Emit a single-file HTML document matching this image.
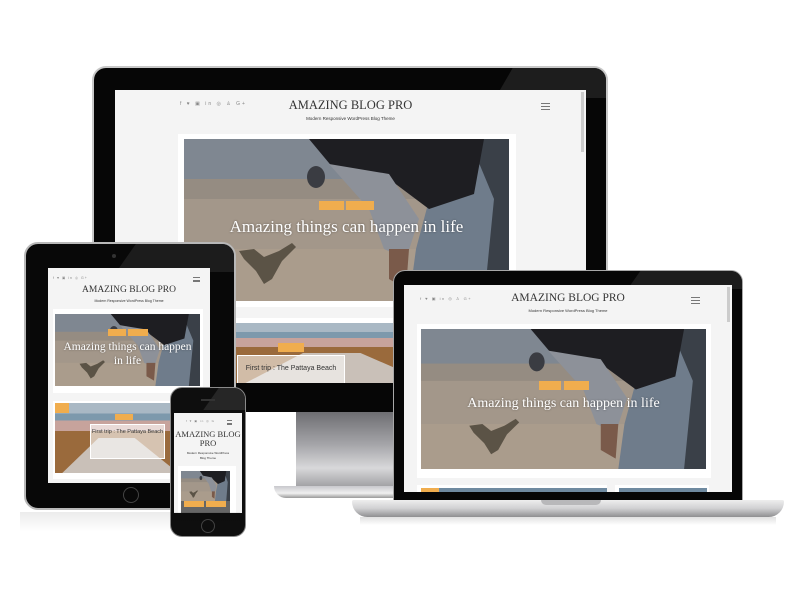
<!DOCTYPE html>
<html><head><meta charset="utf-8"><style>
*{margin:0;padding:0;box-sizing:border-box}
body{width:800px;height:600px;background:#fff;position:relative;overflow:hidden;font-family:"Liberation Sans",sans-serif}
.a{position:absolute}
.scr{position:absolute;background:#f4f4f4;overflow:hidden}
.t{position:absolute;left:0;right:0;text-align:center;font-family:"Liberation Serif",serif;color:#333;white-space:nowrap}
.sub{position:absolute;left:0;right:0;text-align:center;color:#333;white-space:nowrap}
.ham{position:absolute;width:9px;height:7px;border-top:1px solid #777;border-bottom:1px solid #777}
.ham:after{content:"";position:absolute;left:0;right:0;top:2px;border-top:1px solid #777}
.soc{position:absolute;color:#888;white-space:nowrap;letter-spacing:2px}
.tag{position:absolute;background:#f0ad4e;height:9px}
.ht{position:absolute;left:0;right:0;text-align:center;color:#fff;font-family:"Liberation Serif",serif;white-space:nowrap;text-shadow:0 0 2px rgba(0,0,0,.4)}
svg{display:block}
</style></head><body>
<svg width="0" height="0" style="position:absolute">
<defs>
<symbol id="hero" viewBox="0 0 325 162" preserveAspectRatio="none">
<rect width="325" height="162" fill="#a3978a"/>
<rect width="325" height="45" fill="#7f8791"/>
<rect y="40" width="325" height="20" fill="#958c82"/>
<rect y="110" width="325" height="52" fill="#aa9c8c"/>
<polygon points="235,0 325,0 325,162 225,162 232,110 248,50" fill="#6f7c8b"/>
<polygon points="285,0 325,0 325,162 300,162 310,60" fill="#3a4048"/>
<polygon points="125,0 300,0 290,55 245,70 205,40 150,30" fill="#1e1e22"/>
<ellipse cx="132" cy="38" rx="9" ry="11" fill="#3a3c42"/>
<polygon points="145,25 205,35 235,80 222,120 200,110 185,70" fill="#8d9199"/>
<polygon points="205,110 225,110 222,150 205,140" fill="#7a5a4a"/>
<polygon points="55,112 70,110 80,118 95,112 108,104 112,108 98,122 88,140 80,145 72,132 60,120" fill="#5b5346"/>
</symbol>
<symbol id="beach" viewBox="0 0 200 80" preserveAspectRatio="none">
<rect width="200" height="80" fill="#8c6a4a"/>
<rect width="200" height="14" fill="#a9b8c4"/>
<rect y="12" width="200" height="8" fill="#7d99ac"/>
<rect y="20" width="200" height="12" fill="#c7a39c"/>
<rect y="32" width="200" height="48" fill="#9a6a3c"/>
<polygon points="10,80 60,40 110,40 170,80" fill="#c9c0b8"/>
</symbol>
</defs></svg>

<!-- Monitor -->
<div class="a" style="left:92px;top:66px;width:516px;height:346px;background:#060606;border:2px solid #c8c8c8;border-bottom:none;border-radius:14px 14px 0 0;overflow:hidden">
 <div class="a" style="left:410px;top:0;width:120px;height:30px;background:#1d1d1d;transform:skewX(-30deg)"></div>
</div>
<div class="scr" style="left:115px;top:90px;width:471px;height:293px">
 <div class="soc" style="left:65px;top:11px;font-size:5px">f ♥ ▣ in ◎ ♙ G+</div>
 <div class="t" style="top:8px;font-size:12.5px;left:0;right:0">AMAZING BLOG PRO</div>
 <div class="sub" style="top:26px;font-size:4.5px">Modern Responsive WordPress Blog Theme</div>
 <div class="ham" style="left:426px;top:13px"></div>
 <div class="a" style="left:466px;top:2px;width:3px;height:60px;background:#ccc"></div>
 <div class="a" style="left:63px;top:44px;width:338px;height:173px;background:#fff"></div>
 <svg class="a" style="left:69px;top:49px" width="325" height="162"><use href="#hero"/></svg>
 <div class="tag" style="left:204px;top:111px;width:25px"></div>
 <div class="tag" style="left:231px;top:111px;width:28px"></div>
 <div class="ht" style="left:69px;width:325px;top:127px;font-size:17px">Amazing things can happen in life</div>
 <div class="a" style="left:63px;top:228px;width:338px;height:70px;background:#fff"></div>
 <svg class="a" style="left:119px;top:233px" width="230" height="60"><use href="#beach"/></svg>
 <div class="tag" style="left:163px;top:253px;width:26px"></div>
 <div class="a" style="left:122px;top:265px;width:108px;height:30px;border:1px solid #fff;background:rgba(255,255,255,.55)"></div>
 <div class="sub" style="left:122px;right:auto;width:108px;top:275px;font-size:7px;color:#333">First trip : The Pattaya Beach</div>
</div>
<!-- stand -->
<div class="a" style="left:296px;top:412px;width:130px;height:80px;background:linear-gradient(#6e6e72,#a4a4a8 40%,#d8d8da 70%,#909094)"></div>
<div class="a" style="left:274px;top:486px;width:150px;height:12px;background:linear-gradient(#c8c8cc,#f0f0f0 60%,#999);border-radius:0 0 6px 20px"></div>

<!-- Tablet -->
<div class="a" style="left:24px;top:242px;width:212px;height:268px;background:#080808;border:2px solid #b8b8b8;border-radius:14px;overflow:hidden">
 <div class="a" style="left:100px;top:0;width:140px;height:28px;background:#1c1c1c;transform:skewX(-35deg)"></div>
 <div class="a" style="left:97px;top:243px;width:16px;height:16px;border-radius:50%;border:1px solid #444"></div>
 <div class="a" style="left:86px;top:10px;width:4px;height:4px;border-radius:50%;background:#333"></div>
</div>
<div class="scr" style="left:48px;top:268px;width:162px;height:215px">
 <div class="soc" style="left:5px;top:8px;font-size:3.5px;letter-spacing:1px">f ♥ ▣ in ◎ G+</div>
 <div class="ham" style="left:145px;top:9px;width:7px;height:5px"></div>
 <div class="t" style="top:17px;font-size:9.5px">AMAZING BLOG PRO</div>
 <div class="sub" style="top:31px;font-size:3.5px">Modern Responsive WordPress Blog Theme</div>
 <div class="a" style="left:5px;top:41px;width:150px;height:84px;background:#fff"></div>
 <svg class="a" style="left:7px;top:46px" width="145" height="72"><use href="#hero"/></svg>
 <div class="tag" style="left:60px;top:61px;width:18px;height:7px"></div>
 <div class="tag" style="left:80px;top:61px;width:20px;height:7px"></div>
 <div class="ht" style="left:7px;width:145px;top:72px;font-size:11.5px;line-height:14px">Amazing things can happen<br>in life</div>
 <div class="a" style="left:5px;top:133px;width:150px;height:78px;background:#fff"></div>
 <svg class="a" style="left:7px;top:135px" width="145" height="70"><use href="#beach"/></svg>
 <div class="tag" style="left:7px;top:135px;width:14px;height:10px"></div>
 <div class="tag" style="left:67px;top:146px;width:18px;height:6px"></div>
 <div class="a" style="left:42px;top:156px;width:75px;height:35px;border:1px solid #fff;background:rgba(255,255,255,.6)"></div>
 <div class="sub" style="left:42px;right:auto;width:75px;top:161px;font-size:5.5px;line-height:7px;white-space:normal">First trip : The Pattaya Beach</div>
</div>

<!-- Phone -->
<div class="a" style="left:170px;top:387px;width:76px;height:150px;background:#0e0e0e;border:1px solid #8a8a8a;border-radius:12px;overflow:hidden">
 <div class="a" style="left:40px;top:0;width:60px;height:22px;background:#262626;transform:skewX(-35deg)"></div>
 <div class="a" style="left:30px;top:11px;width:14px;height:2px;background:#333"></div>
 <div class="a" style="left:30px;top:131px;width:14px;height:14px;border-radius:50%;border:1px solid #444"></div>
</div>
<div class="scr" style="left:174px;top:413px;width:68px;height:100px">
 <div class="soc" style="left:12px;top:6px;font-size:3px;letter-spacing:1px">f ♥ ▣ in ◎ G</div>
 <div class="ham" style="left:53px;top:7px;width:5px;height:5px"></div>
 <div class="t" style="top:17px;font-size:8.5px;line-height:9px">AMAZING BLOG<br>PRO</div>
 <div class="sub" style="top:38px;font-size:3px;line-height:5px">Modern Responsive WordPress<br>Blog Theme</div>
 <div class="a" style="left:4px;top:53px;width:58px;height:47px;background:#fff"></div>
 <svg class="a" style="left:7px;top:58px" width="49" height="30"><use href="#hero"/></svg>
 <div class="a" style="left:7px;top:88px;width:49px;height:12px;background:#666"></div>
 <div class="tag" style="left:10px;top:88px;width:20px;height:6px"></div>
 <div class="tag" style="left:32px;top:88px;width:20px;height:6px"></div>
</div>

<!-- Laptop -->
<div class="a" style="left:393px;top:270px;width:350px;height:232px;background:#060606;border:1px solid #a8a8a8;border-radius:12px 12px 0 0;overflow:hidden">
 <div class="a" style="left:240px;top:0;width:140px;height:18px;background:#1c1c1c;transform:skewX(-35deg)"></div>
</div>
<div class="scr" style="left:404px;top:285px;width:328px;height:207px">
 <div class="soc" style="left:16px;top:11px;font-size:4px;letter-spacing:1.5px">f ♥ ▣ in ◎ ♙ G+</div>
 <div class="t" style="top:7px;font-size:11.5px">AMAZING BLOG PRO</div>
 <div class="sub" style="top:23px;font-size:4px">Modern Responsive WordPress Blog Theme</div>
 <div class="ham" style="left:287px;top:12px"></div>
 <div class="a" style="left:323px;top:2px;width:3px;height:35px;background:#ccc"></div>
 <div class="a" style="left:13px;top:39px;width:294px;height:154px;background:#fff"></div>
 <svg class="a" style="left:17px;top:44px" width="285" height="140"><use href="#hero"/></svg>
 <div class="tag" style="left:135px;top:96px;width:22px"></div>
 <div class="tag" style="left:160px;top:96px;width:25px"></div>
 <div class="ht" style="left:17px;width:285px;top:111px;font-size:14px">Amazing things can happen in life</div>
 <div class="a" style="left:13px;top:200px;width:190px;height:10px;background:#fff"></div>
 <div class="a" style="left:17px;top:203px;width:186px;height:6px;background:#6f8aa0"></div>
 <div class="tag" style="left:17px;top:203px;width:18px;height:6px"></div>
 <div class="a" style="left:211px;top:200px;width:94px;height:10px;background:#fff"></div>
 <div class="a" style="left:215px;top:203px;width:88px;height:6px;background:#6f8aa0"></div>
</div>
<div class="a" style="left:352px;top:500px;width:432px;height:17px;background:linear-gradient(#eeeeee,#d0d0d2 50%,#8e8e90);border-radius:2px 2px 18px 18px"></div>
<div class="a" style="left:541px;top:500px;width:60px;height:5px;background:#b8b8ba;border-radius:0 0 5px 5px"></div>
<div class="a" style="left:360px;top:517px;width:416px;height:8px;background:linear-gradient(rgba(0,0,0,.12),rgba(0,0,0,0))"></div>
<div class="a" style="left:20px;top:512px;width:220px;height:20px;background:linear-gradient(rgba(0,0,0,.08),rgba(0,0,0,0))"></div>
</body></html>
